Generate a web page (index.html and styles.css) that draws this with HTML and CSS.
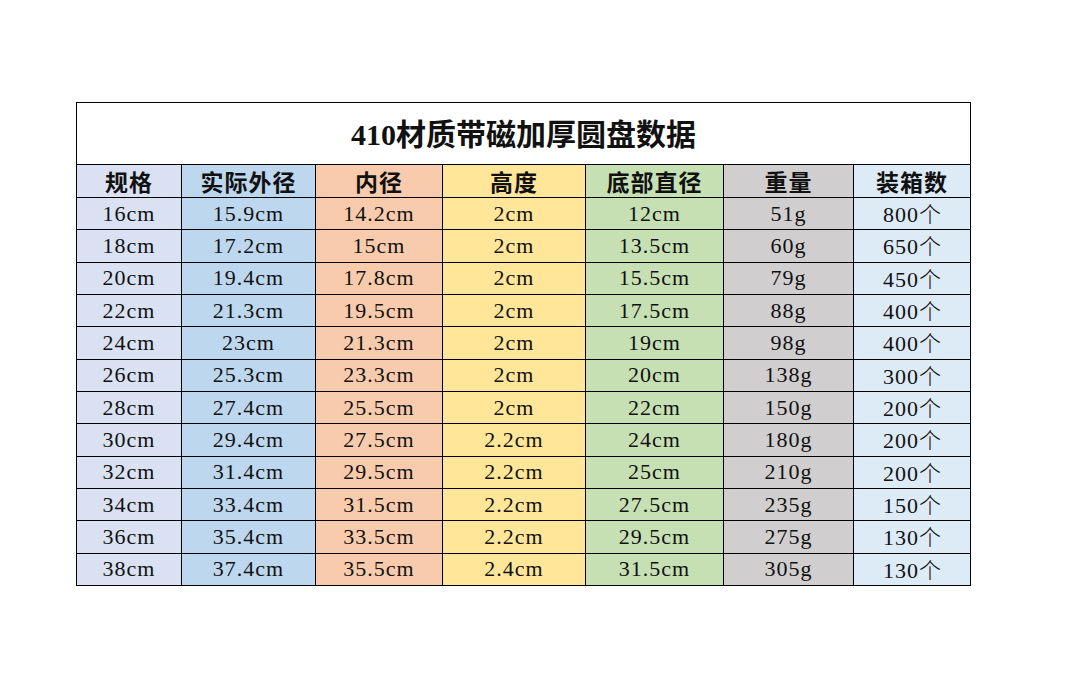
FILE: index.html
```html
<!DOCTYPE html>
<html lang="zh">
<head>
<meta charset="utf-8">
<title>410材质带磁加厚圆盘数据</title>
<link rel="stylesheet" href="styles.css">
</head>
<body>
<div class="page">
<table class="sheet">
  <colgroup>
    <col class="w1"><col class="w2"><col class="w3"><col class="w4"><col class="w5"><col class="w6"><col class="w7">
  </colgroup>
  <tr class="title-row"><td colspan="7" class="title">410材质带磁加厚圆盘数据</td></tr>
  <tr class="head-row">
    <th class="c1">规格</th><th class="c2">实际外径</th><th class="c3">内径</th><th class="c4">高度</th><th class="c5">底部直径</th><th class="c6">重量</th><th class="c7">装箱数</th>
  </tr>
  <tr class="data-row"><td class="c1">16cm</td><td class="c2">15.9cm</td><td class="c3">14.2cm</td><td class="c4">2cm</td><td class="c5">12cm</td><td class="c6">51g</td><td class="c7">800<span class="cjk">个</span></td></tr>
  <tr class="data-row"><td class="c1">18cm</td><td class="c2">17.2cm</td><td class="c3">15cm</td><td class="c4">2cm</td><td class="c5">13.5cm</td><td class="c6">60g</td><td class="c7">650<span class="cjk">个</span></td></tr>
  <tr class="data-row"><td class="c1">20cm</td><td class="c2">19.4cm</td><td class="c3">17.8cm</td><td class="c4">2cm</td><td class="c5">15.5cm</td><td class="c6">79g</td><td class="c7">450<span class="cjk">个</span></td></tr>
  <tr class="data-row"><td class="c1">22cm</td><td class="c2">21.3cm</td><td class="c3">19.5cm</td><td class="c4">2cm</td><td class="c5">17.5cm</td><td class="c6">88g</td><td class="c7">400<span class="cjk">个</span></td></tr>
  <tr class="data-row"><td class="c1">24cm</td><td class="c2">23cm</td><td class="c3">21.3cm</td><td class="c4">2cm</td><td class="c5">19cm</td><td class="c6">98g</td><td class="c7">400<span class="cjk">个</span></td></tr>
  <tr class="data-row"><td class="c1">26cm</td><td class="c2">25.3cm</td><td class="c3">23.3cm</td><td class="c4">2cm</td><td class="c5">20cm</td><td class="c6">138g</td><td class="c7">300<span class="cjk">个</span></td></tr>
  <tr class="data-row"><td class="c1">28cm</td><td class="c2">27.4cm</td><td class="c3">25.5cm</td><td class="c4">2cm</td><td class="c5">22cm</td><td class="c6">150g</td><td class="c7">200<span class="cjk">个</span></td></tr>
  <tr class="data-row"><td class="c1">30cm</td><td class="c2">29.4cm</td><td class="c3">27.5cm</td><td class="c4">2.2cm</td><td class="c5">24cm</td><td class="c6">180g</td><td class="c7">200<span class="cjk">个</span></td></tr>
  <tr class="data-row"><td class="c1">32cm</td><td class="c2">31.4cm</td><td class="c3">29.5cm</td><td class="c4">2.2cm</td><td class="c5">25cm</td><td class="c6">210g</td><td class="c7">200<span class="cjk">个</span></td></tr>
  <tr class="data-row"><td class="c1">34cm</td><td class="c2">33.4cm</td><td class="c3">31.5cm</td><td class="c4">2.2cm</td><td class="c5">27.5cm</td><td class="c6">235g</td><td class="c7">150<span class="cjk">个</span></td></tr>
  <tr class="data-row"><td class="c1">36cm</td><td class="c2">35.4cm</td><td class="c3">33.5cm</td><td class="c4">2.2cm</td><td class="c5">29.5cm</td><td class="c6">275g</td><td class="c7">130<span class="cjk">个</span></td></tr>
  <tr class="data-row"><td class="c1">38cm</td><td class="c2">37.4cm</td><td class="c3">35.5cm</td><td class="c4">2.4cm</td><td class="c5">31.5cm</td><td class="c6">305g</td><td class="c7">130<span class="cjk">个</span></td></tr>
</table>
</div>
</body>
</html>
```
FILE: styles.css
```css
html, body {
  margin: 0;
  padding: 0;
  background: #ffffff;
}
.page {
  padding: 102px 0 0 76px;
}
.sheet {
  border-collapse: collapse;
  table-layout: fixed;
  width: 894px;
  font-family: "Liberation Serif", "Noto Sans CJK SC", serif;
  color: #111;
}
.w1 { width: 105px; }
.w2 { width: 134px; }
.w3 { width: 127px; }
.w4 { width: 143px; }
.w5 { width: 138px; }
.w6 { width: 130px; }
.w7 { width: 117px; }
.sheet td, .sheet th {
  border: 1px solid #000;
  padding: 0;
  text-align: center;
  vertical-align: middle;
  white-space: nowrap;
  line-height: 24px;
}
.sheet .data-row { height: 32.33px; }
.sheet td {
  font-size: 22px;
  font-weight: 400;
  letter-spacing: 1px;
}
.cjk {
  font-family: "Noto Sans CJK SC", sans-serif;
  font-weight: 300;
  letter-spacing: 0;
  line-height: 24px;
}
.sheet .title-row { height: 62px; }
.sheet .title {
  background: #ffffff;
  font-size: 30px;
  font-weight: 700;
  line-height: 34px;
  padding-top: 2px;
  letter-spacing: 0;
}
.sheet .head-row { height: 33px; }
.sheet th {
  font-family: "Noto Sans CJK SC", sans-serif;
  font-size: 23px;
  font-weight: 700;
  line-height: 26px;
  letter-spacing: 1px;
}
.c1 { background: #d9e1f2; }
.c2 { background: #bdd7ee; }
.c3 { background: #f8cbad; }
.c4 { background: #ffe699; }
.c5 { background: #c6e0b4; }
.c6 { background: #d0cece; }
.c7 { background: #ddebf7; }
```
